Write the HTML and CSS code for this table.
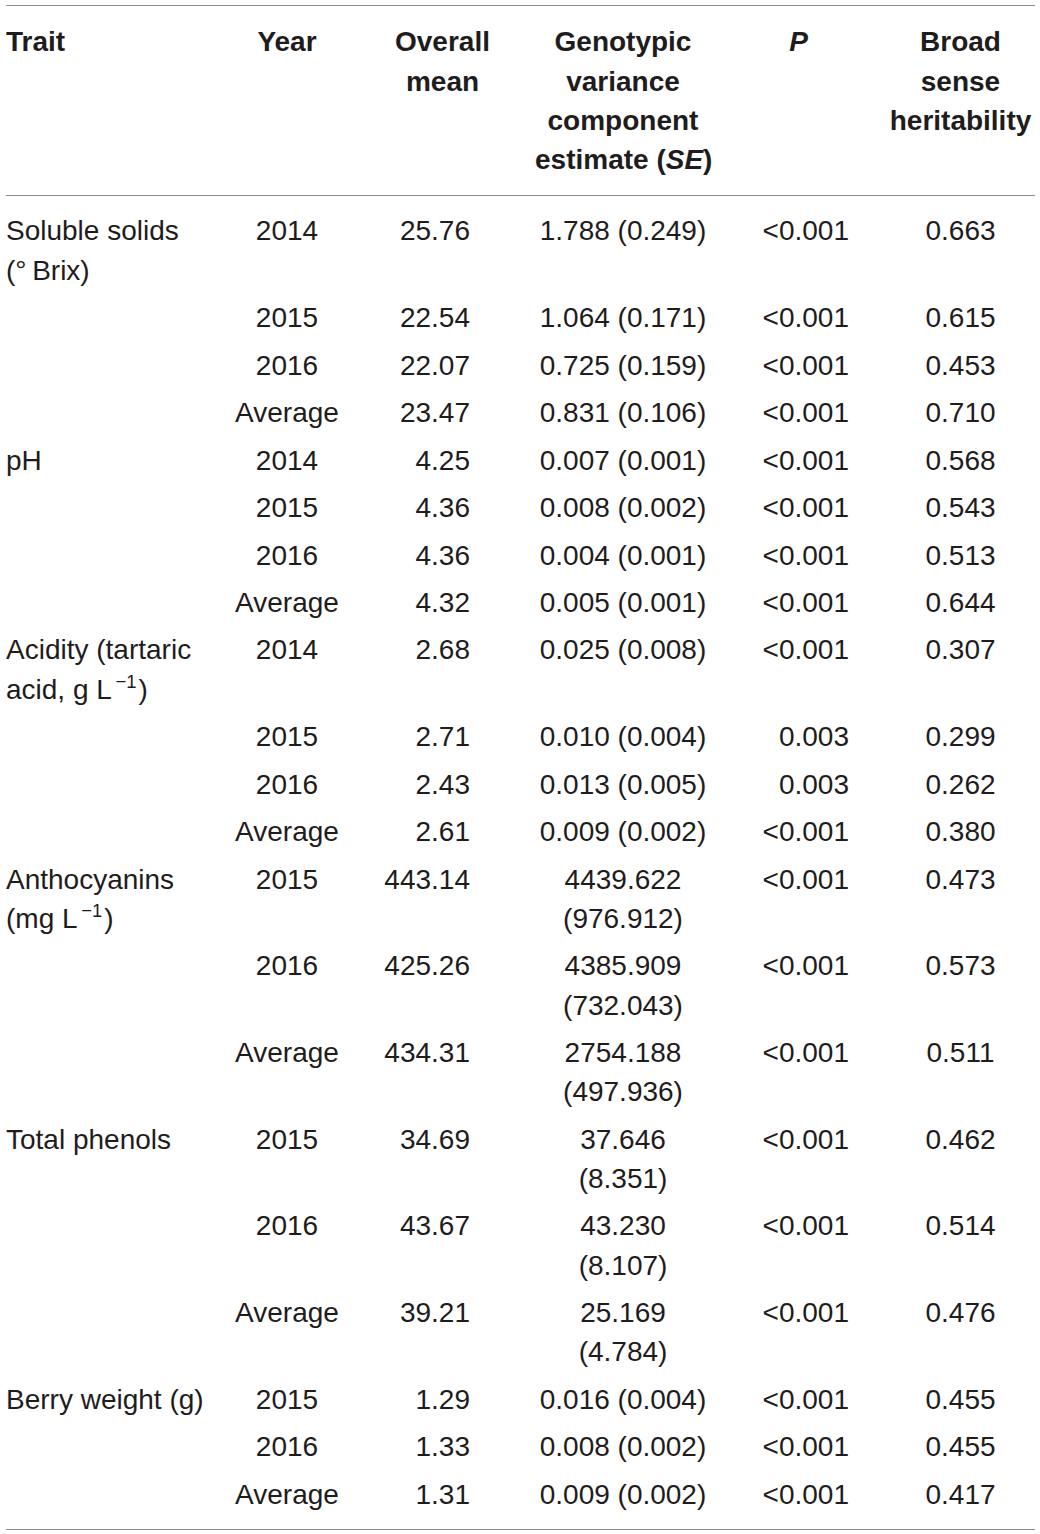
FILE: index.html
```html
<!DOCTYPE html>
<html lang="en">
<head>
  <meta charset="UTF-8" />
  <title>Genetic parameters of berry traits</title>
  <link rel="stylesheet" href="styles.css">
</head>
<body>
  <table class="traits">
    <colgroup>
      <col class="c-trait">
      <col class="c-year">
      <col class="c-mean">
      <col class="c-var">
      <col class="c-p">
      <col class="c-h2">
    </colgroup>
    <thead>
      <tr>
        <th class="trait">Trait</th>
        <th>Year</th>
        <th>Overall<br>mean</th>
        <th>Genotypic<br>variance<br>component<br>estimate (<i>SE</i>)</th>
        <th><i>P</i></th>
        <th>Broad<br>sense<br>heritability</th>
      </tr>
    </thead>
    <tbody>
      <tr class="first">
        <td class="trait">Soluble solids <span class="unit">(&deg;&#8239;Brix)</span></td>
        <td class="year">2014</td><td class="mean">25.76</td><td class="var">1.788 (0.249)</td><td class="p">&lt;0.001</td><td class="h2">0.663</td>
      </tr>
      <tr><td></td><td class="year">2015</td><td class="mean">22.54</td><td class="var">1.064 (0.171)</td><td class="p">&lt;0.001</td><td class="h2">0.615</td></tr>
      <tr><td></td><td class="year">2016</td><td class="mean">22.07</td><td class="var">0.725 (0.159)</td><td class="p">&lt;0.001</td><td class="h2">0.453</td></tr>
      <tr><td></td><td class="year">Average</td><td class="mean">23.47</td><td class="var">0.831 (0.106)</td><td class="p">&lt;0.001</td><td class="h2">0.710</td></tr>

      <tr><td class="trait">pH</td><td class="year">2014</td><td class="mean">4.25</td><td class="var">0.007 (0.001)</td><td class="p">&lt;0.001</td><td class="h2">0.568</td></tr>
      <tr><td></td><td class="year">2015</td><td class="mean">4.36</td><td class="var">0.008 (0.002)</td><td class="p">&lt;0.001</td><td class="h2">0.543</td></tr>
      <tr><td></td><td class="year">2016</td><td class="mean">4.36</td><td class="var">0.004 (0.001)</td><td class="p">&lt;0.001</td><td class="h2">0.513</td></tr>
      <tr><td></td><td class="year">Average</td><td class="mean">4.32</td><td class="var">0.005 (0.001)</td><td class="p">&lt;0.001</td><td class="h2">0.644</td></tr>

      <tr><td class="trait">Acidity (tartaric<br>acid, g L<sup>&minus;1</sup>)</td><td class="year">2014</td><td class="mean">2.68</td><td class="var">0.025 (0.008)</td><td class="p">&lt;0.001</td><td class="h2">0.307</td></tr>
      <tr><td></td><td class="year">2015</td><td class="mean">2.71</td><td class="var">0.010 (0.004)</td><td class="p">0.003</td><td class="h2">0.299</td></tr>
      <tr><td></td><td class="year">2016</td><td class="mean">2.43</td><td class="var">0.013 (0.005)</td><td class="p">0.003</td><td class="h2">0.262</td></tr>
      <tr><td></td><td class="year">Average</td><td class="mean">2.61</td><td class="var">0.009 (0.002)</td><td class="p">&lt;0.001</td><td class="h2">0.380</td></tr>

      <tr><td class="trait">Anthocyanins<br>(mg L<sup>&minus;1</sup>)</td><td class="year">2015</td><td class="mean">443.14</td><td class="var">4439.622 (976.912)</td><td class="p">&lt;0.001</td><td class="h2">0.473</td></tr>
      <tr><td></td><td class="year">2016</td><td class="mean">425.26</td><td class="var">4385.909 (732.043)</td><td class="p">&lt;0.001</td><td class="h2">0.573</td></tr>
      <tr><td></td><td class="year">Average</td><td class="mean">434.31</td><td class="var">2754.188 (497.936)</td><td class="p">&lt;0.001</td><td class="h2">0.511</td></tr>

      <tr><td class="trait">Total phenols</td><td class="year">2015</td><td class="mean">34.69</td><td class="var">37.646 (8.351)</td><td class="p">&lt;0.001</td><td class="h2">0.462</td></tr>
      <tr><td></td><td class="year">2016</td><td class="mean">43.67</td><td class="var">43.230 (8.107)</td><td class="p">&lt;0.001</td><td class="h2">0.514</td></tr>
      <tr><td></td><td class="year">Average</td><td class="mean">39.21</td><td class="var">25.169 (4.784)</td><td class="p">&lt;0.001</td><td class="h2">0.476</td></tr>

      <tr><td class="trait">Berry weight (g)</td><td class="year">2015</td><td class="mean">1.29</td><td class="var">0.016 (0.004)</td><td class="p">&lt;0.001</td><td class="h2">0.455</td></tr>
      <tr><td></td><td class="year">2016</td><td class="mean">1.33</td><td class="var">0.008 (0.002)</td><td class="p">&lt;0.001</td><td class="h2">0.455</td></tr>
      <tr class="last"><td></td><td class="year">Average</td><td class="mean">1.31</td><td class="var">0.009 (0.002)</td><td class="p">&lt;0.001</td><td class="h2">0.417</td></tr>
    </tbody>
  </table>
</body>
</html>
```

FILE: styles.css
```css
body {
  margin: 0;
  background-color: #ffffff;
  color: #1f1c1d;
  font-family: "Liberation Sans", Arial, sans-serif;
}

.traits {
  margin: 5px 0 0 6px;
  width: 1029px;
  table-layout: fixed;
  border-collapse: collapse;
  font-size: 28px;
  line-height: 39.2px;
  border-top: 1px solid #8c8c8c;
  border-bottom: 1px solid #8c8c8c;
}

.c-trait { width: 218px; }
.c-year  { width: 126px; }
.c-mean  { width: 185px; }
.c-var   { width: 176px; }
.c-p     { width: 175px; }
.c-h2    { width: 149px; }

.traits th {
  font-weight: bold;
  text-align: center;
  vertical-align: top;
  white-space: nowrap;
  padding: 16.4px 0 15.8px;
  border-bottom: 1px solid #8c8c8c;
}

.traits td {
  vertical-align: top;
  padding: 4.1px 0 4.2px;
}

.traits .first td { padding-top: 15.4px; }
.traits .last td { padding-bottom: 15.4px; }

.traits .trait { text-align: left; }
.traits .year { text-align: center; }
.traits .mean { text-align: right; padding-right: 65px; }
.traits .var { text-align: center; }
.traits .p { text-align: right; padding-right: 37px; }
.traits .h2 { text-align: center; }

.unit { white-space: nowrap; }

sup {
  font-size: 0.66em;
  line-height: 0;
  vertical-align: 0.6em;
  margin: 0 0.1em 0 0.2em;
}
```
